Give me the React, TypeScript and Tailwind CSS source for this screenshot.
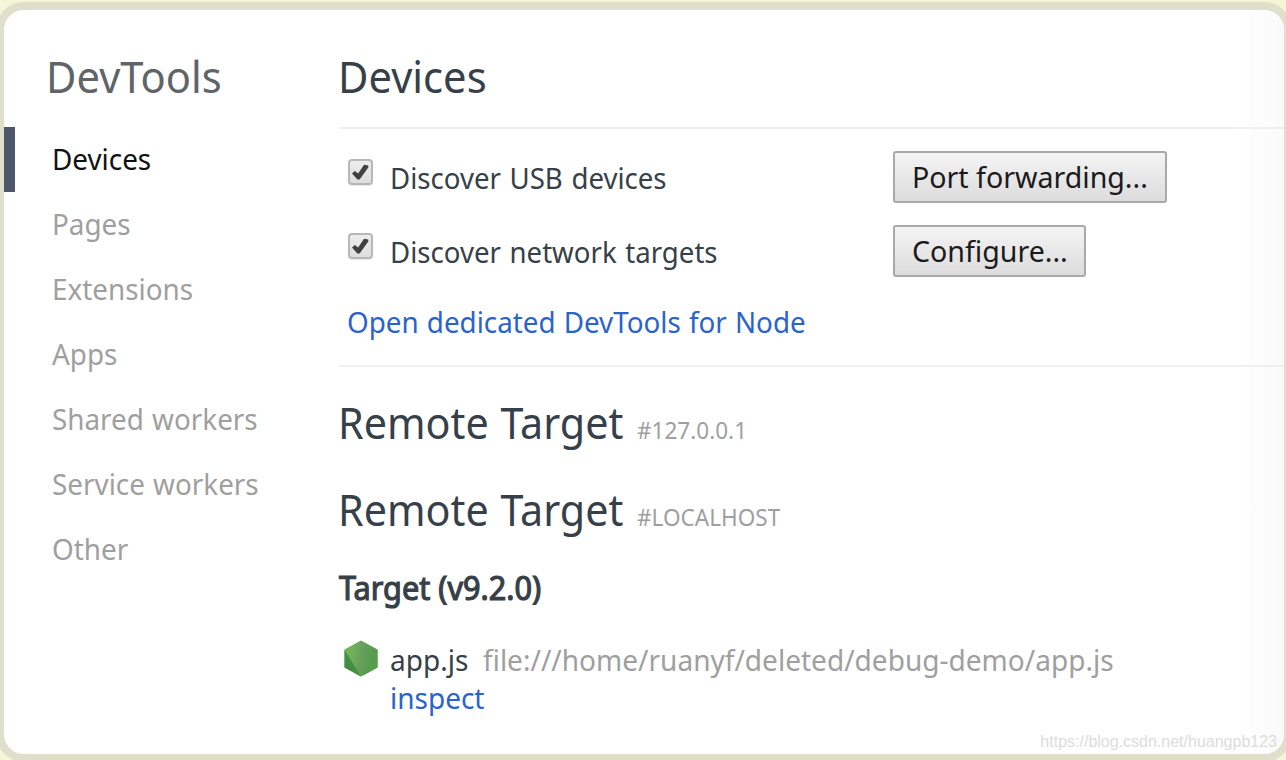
const navItems = [
  "Devices",
  "Pages",
  "Extensions",
  "Apps",
  "Shared workers",
  "Service workers",
  "Other",
];

const settings = [
  { label: "Discover USB devices", button: "Port forwarding...", width: "w-[274px]" },
  { label: "Discover network targets", button: "Configure...", width: "w-[193px]" },
];

const remotes = ["#127.0.0.1", "#LOCALHOST"];

function Checkbox() {
  return (
    <span className="mt-[8px] flex h-[26px] w-[25px] shrink-0 items-center justify-center rounded-[4px] border-2 border-[#b8b8b8] bg-linear-to-b from-[#ececec] to-[#dedede] shadow-[0_1px_1px_rgba(0,0,0,0.1)]">
      <svg viewBox="0 0 21 21" className="h-[21px] w-[21px] shrink-0">
        <path
          d="M2 11.6 4.8 9l3.4 2.4L14 2.8l4.3.6V5.6L9.6 17.4H7.4Z"
          fill="#404040"
        />
      </svg>
    </span>
  );
}

function NodeIcon() {
  return (
    <svg viewBox="0 0 34 37" className="h-[37px] w-[34px] shrink-0">
      <defs>
        <linearGradient id="node" x1="0" y1="0.3" x2="1" y2="0.5">
          <stop offset="0.2" stopColor="#6fb45a" />
          <stop offset="0.5" stopColor="#689f5c" />
          <stop offset="1" stopColor="#4d9a45" />
        </linearGradient>
      </defs>
      <path d="M17 .5 33.5 9.5v18L17 36.5.5 27.5v-18Z" fill="url(#node)" />
      <path d="M.5 10 17 36.5.5 27.5Z" fill="#438f41" />
      <path d="M33.5 10v17.5L19 35.4Z" fill="#569e49" />
    </svg>
  );
}

export default function App() {
  return (
    <div className="h-[760px] w-[1286px] overflow-hidden bg-[#f5f5d8] pt-[2px] font-['Noto_Sans',sans-serif]">
      <div className="-ml-1 flex h-[760px] w-[1296px] overflow-hidden rounded-[28px] border-8 border-[#e0dfcc] bg-white">
        {/* Sidebar */}
        <nav className="w-[335px] shrink-0">
          <h1 className="h-[117px] pl-[42px] text-[43px] leading-[134px] text-[#5f6469]">
            <span className="inline-block origin-left scale-x-[0.97]">DevTools</span>
          </h1>
          <ul>
            {navItems.map((item, index) => (
              <li
                key={item}
                className={`h-[65px] border-l-[11px] pl-[37px] text-[29px] leading-[64px] ${
                  index === 0
                    ? "border-[#4e5767] text-[#111]"
                    : "border-transparent text-[#9f9f9f]"
                }`}
              >
                <span className="inline-block origin-left scale-x-[0.96] [word-spacing:1px]">
                  {item}
                </span>
              </li>
            ))}
          </ul>
        </nav>

        {/* Content */}
        <main className="w-[945px] shrink-0 bg-linear-to-r from-white from-95% to-[#fafafa] text-[#373f49]">
          <h2 className="h-[119px] border-b-2 border-[#f0f0f0] text-[43px] leading-[134px]">
            <span className="-ml-px inline-block origin-left scale-x-[0.97]">Devices</span>
          </h2>

          <div className="h-[238px] border-b-2 border-[#f0f0f0] pt-[22px] pl-[9px] text-[29px]">
            {settings.map(({ label, button, width }) => (
              <div key={label} className="flex h-[74px] items-start">
                <Checkbox />
                <label className="w-[520px] pl-[17px] leading-[53px]">
                  <span className="inline-block origin-left scale-x-[0.952] [word-spacing:1.5px]">
                    {label}
                  </span>
                </label>
                <button
                  className={`h-[52px] rounded-[3px] border-2 border-[#a9a9a9] bg-linear-to-b from-[#f4f4f4] to-[#dcdcdc] pl-[16.5px] text-left leading-[48px] whitespace-nowrap text-[#1b1b1b] ${width}`}
                >
                  <span className="inline-block origin-left scale-x-[0.985]">{button}</span>
                </button>
              </div>
            ))}
            <a className="-ml-px block leading-[46px] text-[#2a63cc]">
              <span className="inline-block origin-left scale-x-[0.958] [word-spacing:1px]">
                Open dedicated DevTools for Node
              </span>
            </a>
          </div>

          <div className="-ml-px pt-[12px]">
            {remotes.map((remote) => (
              <div key={remote} className="flex h-[86.5px] items-baseline leading-[87px]">
                <span className="w-[299px] origin-left scale-x-[0.96] text-[43px] whitespace-nowrap [word-spacing:1px]">
                  Remote Target
                </span>
                <span className="origin-left scale-x-[0.98] text-[23px] text-[#9f9f9f]">
                  {remote}
                </span>
              </div>
            ))}
          </div>

          <h3 className="h-[79px] pt-[13px] text-[32px] leading-[46px] font-normal [-webkit-text-stroke:1.2px_#373f49]">
            <span className="inline-block origin-left scale-x-[0.957]">Target (v9.2.0)</span>
          </h3>

          <div className="flex pt-[9px] pl-[5px] text-[29px] leading-[38px]">
            <NodeIcon />
            <div className="pt-px pl-[12px]">
              <div className="flex">
                <span className="w-[93px] origin-left scale-x-[0.967]">app.js</span>
                <span className="origin-left scale-x-[0.967] text-[#9f9f9f]">
                  file:///home/ruanyf/deleted/debug-demo/app.js
                </span>
              </div>
              <a className="block origin-left scale-x-[0.965] text-[#2a63cc]">inspect</a>
            </div>
          </div>

          <p className="pt-[15px] pr-[7px] text-right font-['Liberation_Sans',sans-serif] text-[16px] leading-[20px] text-[#dcdcdc]">
            https://blog.csdn.net/huangpb123
          </p>
        </main>
      </div>
    </div>
  );
}
